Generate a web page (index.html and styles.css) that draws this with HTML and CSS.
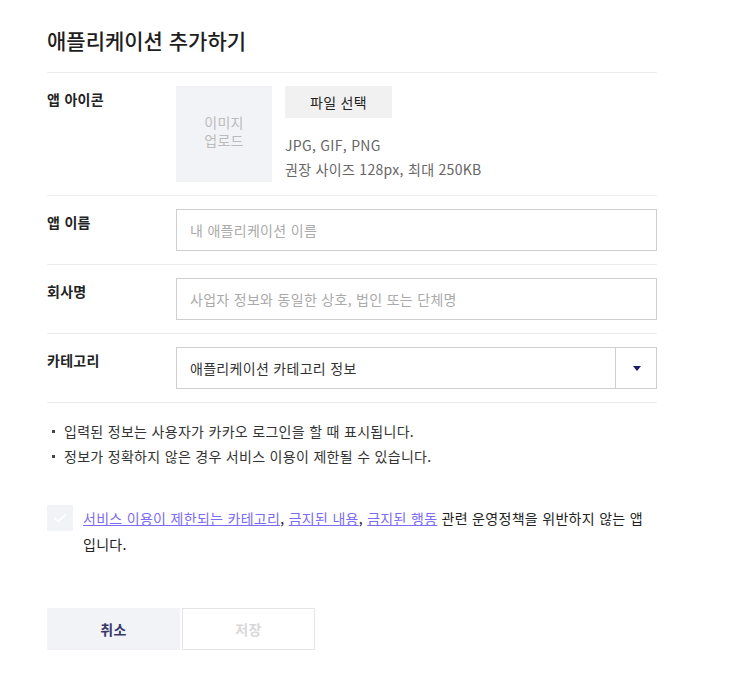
FILE: index.html
```html
<!DOCTYPE html>
<html lang="ko">
<head>
<meta charset="utf-8">
<title>애플리케이션 추가하기</title>
<link rel="stylesheet" href="styles.css">
</head>
<body>
<div class="page">
  <h1 class="title">애플리케이션 추가하기</h1>
  <div class="form">
    <div class="row">
      <div class="label">앱 아이콘</div>
      <div class="field icon-field">
        <div class="thumb">이미지<br>업로드</div>
        <div class="icon-side">
          <button class="file-btn" type="button">파일 선택</button>
          <div class="hint">JPG, GIF, PNG<br>권장 사이즈 128px, 최대 250KB</div>
        </div>
      </div>
    </div>
    <div class="row">
      <div class="label">앱 이름</div>
      <div class="field"><input class="input" type="text" placeholder="내 애플리케이션 이름"></div>
    </div>
    <div class="row">
      <div class="label">회사명</div>
      <div class="field"><input class="input" type="text" placeholder="사업자 정보와 동일한 상호, 법인 또는 단체명"></div>
    </div>
    <div class="row">
      <div class="label">카테고리</div>
      <div class="field">
        <div class="select">
          <span class="select-value">애플리케이션 카테고리 정보</span>
          <span class="select-arrow"><span class="tri"></span></span>
        </div>
      </div>
    </div>
  </div>
  <ul class="notes">
    <li><span class="dot"></span>입력된 정보는 사용자가 카카오 로그인을 할 때 표시됩니다.</li>
    <li><span class="dot"></span>정보가 정확하지 않은 경우 서비스 이용이 제한될 수 있습니다.</li>
  </ul>
  <div class="agree">
    <span class="check">
      <svg width="14" height="10" viewBox="0 0 14 10"><path d="M1.5 5 L5.2 8.4 L12.5 1.5" fill="none" stroke="#ffffff" stroke-width="1.6"/></svg>
    </span>
    <p class="agree-text"><a href="#">서비스 이용이 제한되는 카테고리</a>, <a href="#">금지된 내용</a>, <a href="#">금지된 행동</a> 관련 운영정책을 위반하지 않는 앱 입니다.</p>
  </div>
  <div class="actions">
    <button class="btn btn-cancel" type="button">취소</button>
    <button class="btn btn-save" type="button">저장</button>
  </div>
</div>
</body>
</html>
```
FILE: styles.css
```css
* { box-sizing: border-box; }
html, body { margin: 0; padding: 0; background: #fff; }
body {
  font-family: "Noto Sans CJK KR", "Noto Sans", sans-serif;
  color: #222;
  font-size: 14px;
  letter-spacing: 0.3px;
}
.page {
  width: 610px;
  margin-left: 47px;
}
.title {
  margin: 0;
  padding: 26px 0 18px;
  font-size: 21px;
  line-height: 28px;
  font-weight: 500;
  color: #1e1e1e;
  letter-spacing: 0;
}
.form {
  border-top: 1px solid #ececec;
}
.row {
  display: flex;
  padding: 13px 0;
  border-bottom: 1px solid #ececec;
}
.label {
  width: 129px;
  flex: none;
  font-size: 14px;
  line-height: 27px;
  font-weight: 700;
  color: #222;
}
.field { flex: 1; }
.icon-field {
  display: flex;
  gap: 13px;
}
.thumb {
  width: 96px;
  height: 96px;
  background: #f2f3f7;
  color: #bbbbbb;
  display: flex;
  align-items: center;
  justify-content: center;
  text-align: center;
  font-size: 14px;
  line-height: 18px;
  padding-bottom: 6px;
}
.icon-side {
  display: flex;
  flex-direction: column;
  align-items: flex-start;
}
.file-btn {
  width: 107px;
  height: 32px;
  border: 0;
  background: #f1f1f1;
  font-family: inherit;
  font-size: 14px;
  letter-spacing: inherit;
  color: #222;
  padding: 0;
}
.hint {
  margin-top: 15px;
  font-size: 14px;
  line-height: 24px;
  color: #666;
}
.input {
  display: block;
  width: 100%;
  height: 42px;
  border: 1px solid #cfcfcf;
  padding: 0 13px;
  font-family: inherit;
  font-size: 14px;
  letter-spacing: inherit;
  color: #333;
  outline: none;
}
.input::placeholder { color: #aaaaaa; }
.select {
  display: flex;
  height: 42px;
  border: 1px solid #cfcfcf;
}
.select-value {
  flex: 1;
  padding: 0 13px;
  line-height: 40px;
  color: #333;
}
.select-arrow {
  width: 41px;
  border-left: 1px solid #cfcfcf;
  display: flex;
  align-items: center;
  justify-content: center;
}
.tri {
  width: 0;
  height: 0;
  border-left: 4px solid transparent;
  border-right: 4px solid transparent;
  border-top: 5px solid #1f1a6b;
  margin-left: 1px;
}
.notes {
  list-style: none;
  margin: 0;
  padding: 16px 0 0;
}
.notes li {
  display: flex;
  align-items: center;
  line-height: 25px;
  color: #333;
}
.dot {
  width: 3px;
  height: 3px;
  background: #444;
  margin: 0 9px 0 5px;
  flex: none;
}
.agree {
  display: flex;
  gap: 10px;
  margin-top: 36px;
}
.check {
  width: 26px;
  height: 26px;
  flex: none;
  background: #f2f3f7;
  display: flex;
  align-items: center;
  justify-content: center;
}
.agree-text {
  margin: 0;
  line-height: 26px;
  color: #222;
}
.agree-text a {
  color: #7b6cf6;
  text-decoration: underline;
}
.actions {
  display: flex;
  gap: 2px;
  margin-top: 51px;
}
.btn {
  width: 133px;
  height: 42px;
  font-family: inherit;
  font-size: 14px;
  letter-spacing: inherit;
  padding: 0;
}
.btn-cancel {
  background: #f2f3f7;
  border: 0;
  color: #3a3a6a;
  font-weight: 700;
}
.btn-save {
  background: #fff;
  border: 1px solid #e5e5e5;
  color: #d8d8d8;
  font-weight: 700;
}
```
